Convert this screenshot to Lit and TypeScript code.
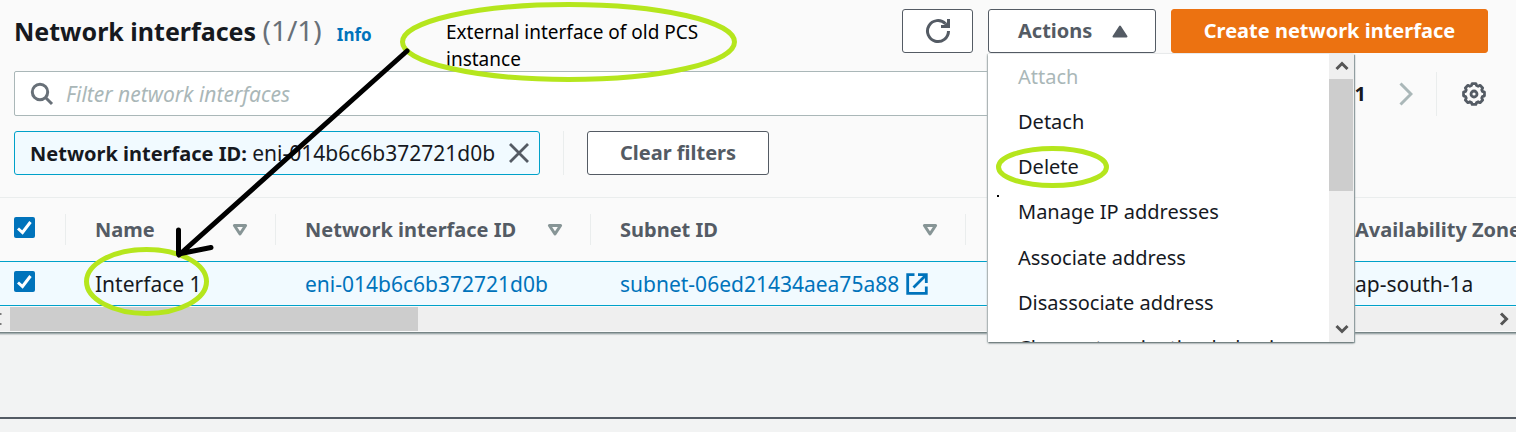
import { LitElement, html, css, svg } from "lit";
import { customElement, state } from "lit/decorators.js";

interface Column {
  label: string;
  cls: string;
}

const COLUMNS: Column[] = [
  { label: "Name", cls: "c-name" },
  { label: "Network interface ID", cls: "c-eni" },
  { label: "Subnet ID", cls: "c-subnet" },
];

const ACTIONS = [
  { label: "Attach", disabled: true },
  { label: "Detach", disabled: false },
  { label: "Delete", disabled: false },
  { label: "Manage IP addresses", disabled: false },
  { label: "Associate address", disabled: false },
  { label: "Disassociate address", disabled: false },
  { label: "Change termination behavior", disabled: false },
];

const sortIcon = html`<svg width="16" height="14" viewBox="0 0 16 14" aria-hidden="true">
  <path d="M2.4 2.5h11.2L8 11z" fill="none" stroke="#879596" stroke-width="3" stroke-linejoin="round" />
</svg>`;

const chevron = (d: string) => svg`<path d=${d} fill="none" stroke="#555" stroke-width="3" />`;

/** Outline of an eight-toothed cog centred on 12,12. */
const gearPoints = Array.from({ length: 8 }, (_, k) =>
  [
    [-17, 8.8],
    [-10, 10.6],
    [10, 10.6],
    [17, 8.8],
  ]
    .map(([offset, r]) => {
      const a = ((k * 45 + offset) * Math.PI) / 180;
      return `${(12 + r * Math.sin(a)).toFixed(2)},${(12 - r * Math.cos(a)).toFixed(2)}`;
    })
    .join(" ")
).join(" ");

@customElement("app-root")
export class AppRoot extends LitElement {
  @state() private open = true;

  static styles = css`
    :host {
      display: block;
      position: relative;
      min-height: 100vh;
      overflow: hidden;
      background: #f2f3f3;
      color: #16191f;
      font: 20px/28px "Noto Sans", "Open Sans", sans-serif;
    }
    * { box-sizing: border-box; }
    button, input { font: inherit; color: inherit; margin: 0; }
    button { cursor: pointer; }
    svg { display: block; }
    a { color: #0073bb; text-decoration: none; }
    .panel {
      background: #fafafa;
      border-bottom: 1px solid #768485;
      box-shadow: 0 1px 1px #a3aeaf, 0 2px 1px #d9dddd;
    }
    .head, .tools, .filters { display: flex; align-items: center; }
    .head { padding: 9px 28px 0 14px; gap: 15px; }
    .title { display: flex; align-items: baseline; gap: 15px; flex: 1; }
    h1 { margin: 0; font-size: 25px; line-height: 44px; font-weight: 700; }
    h1 span { font-size: 28px; line-height: 28px; font-weight: 400; color: #687078; }
    .info { font-size: 17px; font-weight: 700; }
    .btn {
      height: 44px;
      border: 1px solid #545b64;
      border-radius: 3px;
      background: #fff;
      color: #545b64;
      font-weight: 700;
      padding: 0 30px;
      display: flex;
      align-items: center;
      justify-content: center;
      white-space: nowrap;
    }
    .refresh { width: 71px; padding: 0; }
    .dropdown { position: relative; }
    .toggle { width: 168px; justify-content: space-between; padding: 0 27px 0 29px; }
    .primary { width: 317px; padding: 0; background: #ec7211; border-color: #ec7211; color: #fff; }
    .menu {
      position: absolute;
      z-index: 2;
      top: 45px;
      left: 0;
      width: 366px;
      height: 288px;
      display: flex;
      overflow: hidden;
      background: #fff;
      box-shadow: 0 1px 2px #5d6a6c, 1px 1px 1px #aab7b8, -1px 0 1px #d5dbdb;
    }
    .menu ul {
      flex: 1;
      height: 317px;
      margin: 0;
      padding: 0;
      list-style: none;
      display: grid;
      grid-template-rows: repeat(7, 1fr);
    }
    .menu li { display: flex; }
    .menu li button {
      flex: 1;
      border: 0;
      background: none;
      text-align: left;
      padding: 0 0 0 30px;
      white-space: nowrap;
    }
    .menu li button:disabled { color: #aab7b8; }
    .vbar {
      width: 25px;
      background: #efefef;
      display: flex;
      flex-direction: column;
      align-items: center;
      justify-content: space-between;
    }
    .vbar .thumb { width: 100%; height: 112px; margin-bottom: auto; background: #cdcdcd; border-right: 1px solid #efefef; }
    .vbar svg { margin: 6px 0 7px; }
    .tools { padding: 18px 30px 0 14px; }
    .search {
      flex: 1;
      height: 45px;
      display: flex;
      align-items: center;
      gap: 12px;
      padding: 0 15px;
      background: #fff;
      border: 1px solid #aab7b8;
      border-radius: 2px;
    }
    .search input { flex: 1; border: 0; outline: 0; padding: 0; background: none; font-size: 21px; }
    .search input::placeholder { color: #aab7b8; font-style: italic; opacity: 1; }
    .pager { display: flex; align-items: center; padding-left: 132px; }
    .pager b { margin-right: 33px; }
    .icon { border: 0; padding: 0; background: none; display: block; }
    .rule { width: 1px; height: 44px; background: #eaeded; }
    .pager .rule { margin: 0 25px 0 23px; }
    .filters { padding: 15px 14px 22px; gap: 23px; }
    .token {
      width: 526px;
      height: 44px;
      display: flex;
      align-items: center;
      justify-content: space-between;
      padding: 0 10px 0 15px;
      border: 1px solid #00a1c9;
      border-radius: 3px;
      background: #f1faff;
      white-space: nowrap;
      font-size: 21px;
    }
    .token b { font-size: 20px; }
    .clear { width: 182px; padding: 0; }
    .scroll { overflow: hidden; border-top: 1px solid #eaeded; }
    table { width: 100%; table-layout: fixed; border-collapse: separate; border-spacing: 0; }
    th, td { padding: 0; text-align: left; white-space: nowrap; }
    th { height: 63px; color: #545b64; }
    td {
      height: 45px;
      background: #f1faff;
      border: solid #00a1c9;
      border-width: 1px 0;
      padding-left: 29px;
      font-size: 21px;
    }
    .c-check { width: 66px; }
    .c-name { width: 210px; }
    .c-eni { width: 315px; }
    .c-subnet { width: 375px; }
    .c-hidden { width: 360px; }
    td.c-check { padding-left: 14px; }
    .hcell {
      display: flex;
      align-items: center;
      justify-content: space-between;
      height: 31px;
      padding: 0 27px 0 29px;
      border-right: 1px solid #eaeded;
    }
    .c-check .hcell { padding: 0 0 0 14px; }
    .c-zone .hcell { border: 0; padding-right: 0; }
    .ext { display: flex; align-items: center; gap: 7px; }
    input[type="checkbox"] {
      appearance: none;
      display: block;
      width: 21px;
      height: 21px;
      margin-bottom: 4px;
      border-radius: 2px;
      background: #0073bb;
      background-image: url("data:image/svg+xml,%3Csvg xmlns='http://www.w3.org/2000/svg' viewBox='0 0 21 21'%3E%3Cpath d='M4 11.5l4.5 4L16.500 5' fill='none' stroke='white' stroke-width='3'/%3E%3C/svg%3E");
    }
    .hbar {
      display: flex;
      align-items: center;
      justify-content: space-between;
      height: 24px;
      margin: 1px 0;
      padding-right: 6px;
      background: #efefef;
    }
    .hbar .thumb { width: 408px; height: 24px; margin: 0 auto 0 8px; background: #cdcdcd; }
    .split { margin-top: 84px; height: 15px; border-top: 2px solid #545b64; background: #f2f3f3; }
    .notes { position: absolute; z-index: 3; top: 0; left: 0; pointer-events: none; }
    .callout {
      position: absolute;
      z-index: 3;
      top: 19px;
      left: 446px;
      width: 280px;
      margin: 0;
      font-size: 19px;
      line-height: 27px;
      color: #000;
    }
  `;

  private renderMenu() {
    return html`<div class="menu">
      <ul>
        ${ACTIONS.map((a) => html`<li><button ?disabled=${a.disabled}>${a.label}</button></li>`)}
      </ul>
      <div class="vbar">
        <svg width="14" height="12" viewBox="0 0 14 12">${chevron("M1.500 9L7 3.500L12.500 9")}</svg>
        <div class="thumb"></div>
        <svg width="14" height="12" viewBox="0 0 14 12">${chevron("M1.500 3L7 8.500L12.500 3")}</svg>
      </div>
    </div>`;
  }

  render() {
    return html`
      <section class="panel">
        <header class="head">
          <div class="title">
            <h1>Network interfaces <span>(1/1)</span></h1>
            <a class="info" href="#">Info</a>
          </div>
          <button class="btn refresh" aria-label="Refresh">
            <svg width="26" height="26" viewBox="0 0 26 26">
              <path d="M23.500 13A10.500 10.500 0 1 1 20.500 5.700" fill="none" stroke="#545b64" stroke-width="3" />
              <path d="M23.500 1v7.500H16" fill="none" stroke="#545b64" stroke-width="3" />
              <path d="M17.500 8.500L23 3.500V8.500z" fill="#545b64" />
            </svg>
          </button>
          <div class="dropdown">
            <button class="btn toggle" aria-expanded=${this.open} @click=${() => (this.open = !this.open)}>
              Actions
              <svg width="16" height="13" viewBox="0 0 16 13">
                <path d="M8 1.500L14.500 11.500H1.500z" fill="#545b64" stroke="#545b64" stroke-width="2" stroke-linejoin="round" />
              </svg>
            </button>
            ${this.open ? this.renderMenu() : ""}
          </div>
          <button class="btn primary">Create network interface</button>
        </header>

        <div class="tools">
          <div class="search">
            <svg width="24" height="24" viewBox="0 0 24 24">
              <circle cx="10" cy="10" r="7.700" fill="none" stroke="#687078" stroke-width="3" />
              <path d="M15.500 15.500L22 22" stroke="#687078" stroke-width="3" />
            </svg>
            <input type="text" aria-label="Filter network interfaces" placeholder="Filter network interfaces" />
          </div>
          <div class="pager">
            <b>1</b>
            <button class="icon" aria-label="Next page">
              <svg width="14" height="24" viewBox="0 0 14 24">
                <path d="M1.500 1.500L12 12L1.500 22.500" fill="none" stroke="#aab7b8" stroke-width="3" />
              </svg>
            </button>
            <span class="rule"></span>
            <button class="icon" aria-label="Preferences">
              <svg width="24" height="24" viewBox="0 0 24 24" fill="none" stroke="#545b64" stroke-width="2.800">
                <polygon points=${gearPoints} stroke-linejoin="round" />
                <circle cx="12" cy="12" r="3" />
              </svg>
            </button>
          </div>
        </div>

        <div class="filters">
          <div class="token">
            <span><b>Network interface ID:</b> eni-014b6c6b372721d0b</span>
            <button class="icon" aria-label="Remove filter">
              <svg width="20" height="20" viewBox="0 0 20 20">
                <path d="M1 1L19 19M19 1L1 19" stroke="#545b64" stroke-width="2.800" />
              </svg>
            </button>
          </div>
          <span class="rule"></span>
          <button class="btn clear">Clear filters</button>
        </div>

        <div class="scroll">
          <table>
            <thead>
              <tr>
                <th class="c-check">
                  <div class="hcell"><input type="checkbox" checked aria-label="Select all" /></div>
                </th>
                ${COLUMNS.map((c) => html`<th class=${c.cls}><div class="hcell">${c.label} ${sortIcon}</div></th>`)}
                <th class="c-hidden"></th>
                <th class="c-zone"><div class="hcell">Availability Zone</div></th>
              </tr>
            </thead>
            <tbody>
              <tr>
                <td class="c-check"><input type="checkbox" checked aria-label="Select Interface 1" /></td>
                <td>Interface 1</td>
                <td><a href="#">eni-014b6c6b372721d0b</a></td>
                <td>
                  <a class="ext" href="#">
                    subnet-06ed21434aea75a88
                    <svg width="22" height="22" viewBox="0 0 22 22" fill="none" stroke="#0073bb" stroke-width="2.800">
                      <path d="M8.500 1.700H1.700v18.600h18.600V13.500" />
                      <path d="M12 1.700h8.300V10M20 2L7.500 14.500" />
                    </svg>
                  </a>
                </td>
                <td></td>
                <td>ap-south-1a</td>
              </tr>
            </tbody>
          </table>
        </div>
        <div class="hbar">
          <svg width="2" height="12" viewBox="0 0 2 12"><path d="M0 1h1.500M0 11h1.500" stroke="#555" stroke-width="1.500" /></svg>
          <div class="thumb"></div>
          <svg width="12" height="14" viewBox="0 0 12 14">${chevron("M3 1.500L8.500 7L3 12.500")}</svg>
        </div>
      </section>
      <div class="split"></div>

      <p class="callout">External interface of old PCS instance</p>
      <svg class="notes" width="1516" height="432" viewBox="0 0 1516 432" fill="none" aria-hidden="true">
        <g stroke="#b5e61d" stroke-width="5">
          <ellipse cx="568.500" cy="42" rx="166" ry="37.500" />
          <ellipse cx="146.500" cy="281.500" rx="60" ry="32" />
          <ellipse cx="1052.500" cy="167" rx="54" ry="18.500" />
        </g>
        <path
          d="M407 51L179 255M178.500 230V254L211 247.500"
          stroke="#000"
          stroke-width="5"
          stroke-linecap="round"
          stroke-linejoin="round"
        />
        <path d="M997 195h2v2h-2z" fill="#000" />
      </svg>
    `;
  }
}
